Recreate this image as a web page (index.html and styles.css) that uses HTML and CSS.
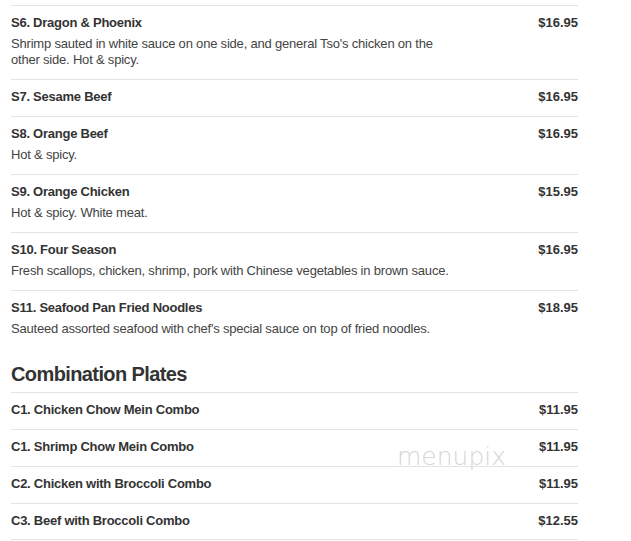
FILE: index.html
```html
<!DOCTYPE html>
<html>
<head>
<meta charset="utf-8">
<link rel="stylesheet" href="styles.css">
</head>
<body>
<div class="menu">
  <ul class="items">
    <li class="item">
      <div class="info">
        <div class="name">S6. Dragon &amp; Phoenix</div>
        <div class="desc">Shrimp sauted in white sauce on one side, and general Tso's chicken on the other side. Hot &amp; spicy.</div>
      </div>
      <div class="price">$16.95</div>
    </li>
    <li class="item">
      <div class="info"><div class="name">S7. Sesame Beef</div></div>
      <div class="price">$16.95</div>
    </li>
    <li class="item">
      <div class="info">
        <div class="name">S8. Orange Beef</div>
        <div class="desc">Hot &amp; spicy.</div>
      </div>
      <div class="price">$16.95</div>
    </li>
    <li class="item">
      <div class="info">
        <div class="name">S9. Orange Chicken</div>
        <div class="desc">Hot &amp; spicy. White meat.</div>
      </div>
      <div class="price">$15.95</div>
    </li>
    <li class="item">
      <div class="info">
        <div class="name">S10. Four Season</div>
        <div class="desc">Fresh scallops, chicken, shrimp, pork with Chinese vegetables in brown sauce.</div>
      </div>
      <div class="price">$16.95</div>
    </li>
    <li class="item">
      <div class="info">
        <div class="name">S11. Seafood Pan Fried Noodles</div>
        <div class="desc">Sauteed assorted seafood with chef's special sauce on top of fried noodles.</div>
      </div>
      <div class="price">$18.95</div>
    </li>
  </ul>

  <h2 class="section">Combination Plates</h2>
  <ul class="items last">
    <li class="item">
      <div class="info"><div class="name">C1. Chicken Chow Mein Combo</div></div>
      <div class="price">$11.95</div>
    </li>
    <li class="item">
      <div class="info"><div class="name">C1. Shrimp Chow Mein Combo</div></div>
      <div class="price">$11.95</div>
    </li>
    <li class="item">
      <div class="info"><div class="name">C2. Chicken with Broccoli Combo</div></div>
      <div class="price">$11.95</div>
    </li>
    <li class="item">
      <div class="info"><div class="name">C3. Beef with Broccoli Combo</div></div>
      <div class="price">$12.55</div>
    </li>
  </ul>
  <div class="watermark">menupix</div>
</div>
</body>
</html>
```
FILE: styles.css
```css
html, body {
  margin: 0;
  padding: 0;
  background: #fff;
  overflow: hidden;
}
body {
  padding-top: 5px;
  font-family: "Liberation Sans", Arial, sans-serif;
  color: #333;
}
.menu {
  position: relative;
  margin-left: 11px;
  width: 567px;
}
.items {
  list-style: none;
  margin: 0;
  padding: 0;
}
.item {
  display: flex;
  justify-content: space-between;
  align-items: flex-start;
  border-top: 1px solid #e3e3e3;
  padding: 8px 0 11px;
}
.last .item:last-child {
  border-bottom: 1px solid #e3e3e3;
  padding-bottom: 10px;
}
.info {
  width: 445px;
}
.name {
  font-size: 13px;
  font-weight: bold;
  line-height: 17px;
  letter-spacing: -0.25px;
  color: #333;
}
.desc {
  margin-top: 5px;
  font-size: 13px;
  line-height: 16px;
  letter-spacing: -0.2px;
  color: #444;
}
.price {
  font-size: 13px;
  font-weight: bold;
  line-height: 17px;
  color: #333;
}
.section {
  margin: 14px 0 6px;
  font-size: 20px;
  line-height: 24px;
  font-weight: bold;
  letter-spacing: -0.6px;
  color: #333;
}
.watermark {
  position: absolute;
  left: 386px;
  top: 437px;
  font-family: "DejaVu Sans", sans-serif;
  font-weight: 200;
  font-size: 25px;
  letter-spacing: 0;
  color: #d6d6d6;
  pointer-events: none;
}
```
